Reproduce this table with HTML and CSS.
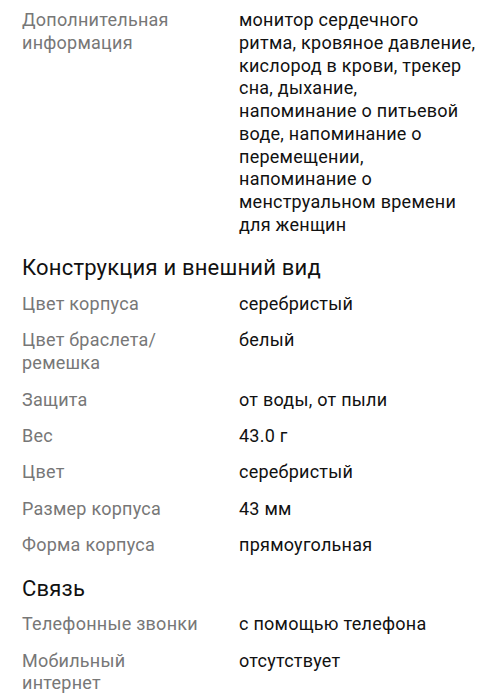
FILE: index.html
```html
<!DOCTYPE html>
<html lang="ru">
<head>
<meta charset="utf-8">
<link rel="stylesheet" href="styles.css">
</head>
<body>
<div class="page">
  <section class="section">
    <div class="rows">
      <div class="row">
        <div class="label">Дополнительная информация</div>
        <div class="value">монитор сердечного ритма, кровяное давление, кислород в крови, трекер сна, дыхание, напоминание о питьевой воде, напоминание о перемещении, напоминание о менструальном времени для женщин</div>
      </div>
    </div>
  </section>
  <section class="section">
    <h2 class="title">Конструкция и внешний вид</h2>
    <div class="rows">
      <div class="row"><div class="label">Цвет корпуса</div><div class="value">серебристый</div></div>
      <div class="row"><div class="label">Цвет браслета/ ремешка</div><div class="value">белый</div></div>
      <div class="row"><div class="label">Защита</div><div class="value">от воды, от пыли</div></div>
      <div class="row"><div class="label">Вес</div><div class="value">43.0 г</div></div>
      <div class="row"><div class="label">Цвет</div><div class="value">серебристый</div></div>
      <div class="row"><div class="label">Размер корпуса</div><div class="value">43 мм</div></div>
      <div class="row"><div class="label">Форма корпуса</div><div class="value">прямоугольная</div></div>
    </div>
  </section>
  <section class="section">
    <h2 class="title">Связь</h2>
    <div class="rows">
      <div class="row"><div class="label">Телефонные звонки</div><div class="value">с помощью телефона</div></div>
      <div class="row"><div class="label">Мобильный интернет</div><div class="value">отсутствует</div></div>
    </div>
  </section>
</div>
</body>
</html>
```

FILE: styles.css
```css
html, body {
  margin: 0;
  padding: 0;
  background: #ffffff;
}
body {
  font-family: Roboto, "Noto Sans", sans-serif;
  -webkit-font-smoothing: antialiased;
}
.page {
  padding: 9px 22px 0 22px;
  display: flex;
  flex-direction: column;
  gap: 17.7px;
}
.section {
  display: flex;
  flex-direction: column;
  gap: 10.8px;
}
.title {
  margin: 0;
  font-size: 22px;
  line-height: 28px;
  font-weight: 400;
  letter-spacing: 0.2px;
  color: #111111;
}
.rows {
  display: flex;
  flex-direction: column;
  gap: 13.65px;
}
.row {
  display: grid;
  grid-template-columns: 180px 1fr;
  column-gap: 37px;
  font-size: 18px;
  line-height: 22.75px;
  letter-spacing: 0.25px;
}
.label {
  color: #777777;
}
.value {
  color: #111111;
}
```
